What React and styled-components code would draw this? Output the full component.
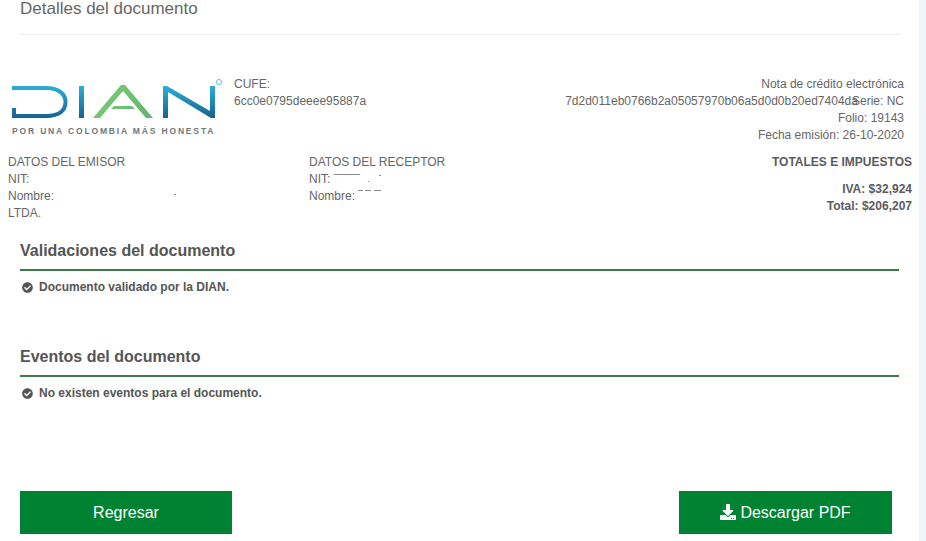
import React from "react";
import styled, { createGlobalStyle } from "styled-components";
import { FaCheckCircle, FaDownload } from "react-icons/fa";

const Global = createGlobalStyle`
  html, body { margin: 0; padding: 0; background: #fff; overflow: hidden; }
  body { font-family: "Liberation Sans", Arial, sans-serif; color: #666; font-size: 12px; line-height: 17px; }
`;
const Page = styled.div`display: flex; width: 926px; height: 541px; overflow: hidden;`;
const Main = styled.main`width: 919px; flex: none; display: flex; flex-direction: column;`;
const Rail = styled.div`flex: 1; background: #f1f3f6;`;
const Title = styled.h1`
  margin: 0 19px 0 20px; height: 34px; border-bottom: 1px solid #eeeeee;
  font-weight: 400; font-size: 17px; line-height: 17px; color: #666;
`;
const Header = styled.div`display: flex; padding: 41px 15px 0 8px; height: 68px; justify-content: space-between;`;
const LogoBlock = styled.div`width: 226px; flex: none; padding-top: 2px; display: flex; flex-direction: column;`;
const Tagline = styled.div`
  margin: 0 0 0 4px; white-space: nowrap; font-size: 8.5px; line-height: 10px; font-weight: 700;
  letter-spacing: 1.84px; color: #71787d;
`;
const Cufe = styled.div`flex: 1; white-space: nowrap; min-width: 0;`;
const Gap = styled.span`display: inline-block; width: ${p => p.$w}px;`;
const Meta = styled.div`flex: none; text-align: right;`;
const Parties = styled.div`display: flex; padding: 10px 7px 0 8px; height: 67px;`;
const Party = styled.div`width: 301px; flex: none; white-space: nowrap;`;
const Totals = styled.div`flex: 1; text-align: right; font-weight: 700; color: #5c5c5c;`;
const TotalsTitle = styled.div`margin-bottom: 10px;`;
const Mark = styled.span`
  display: inline-block; width: ${p => p.$w}px; height: 1px; background: #8a8a8a;
  vertical-align: ${p => p.$v}px; margin-left: ${p => p.$m || 0}px;
`;
const Section = styled.section`margin: 20px 20px 0; height: 86px;`;
const SectionTitle = styled.h2`
  margin: 0; font-size: 16px; line-height: 18px; font-weight: 700; color: #555; padding: 1px 0 9px;
  border-bottom: 2px solid #3f7a4b;
`;
const Item = styled.p`
  margin: 9px 0 0 2px; display: flex; align-items: center; gap: 6px;
  font-size: 12px; line-height: 15px; font-weight: 700; color: #555;
  svg { width: 11px; height: 11px; flex: none; color: #555; }
`;
const Actions = styled.div`display: flex; justify-content: space-between; margin: 58px 27px 0 20px;`;
const Button = styled.button`
  width: ${p => p.$w}px; height: 43px; border: 0; border-radius: 0; background: #008233; color: #fff;
  font-family: inherit; font-size: 16px; display: flex; align-items: center; justify-content: center; gap: 4px; padding: 0;
  svg { width: 16px; height: 16px; margin-top: -2px; }
`;

function Logo() {
  return (
    <svg width="214" height="48" viewBox="10 78 214 48" fill="none" style={{ marginLeft: 2, display: "block" }} aria-label="DIAN">
      <defs>
        <linearGradient id="blue" gradientUnits="userSpaceOnUse" x1="0" y1="86" x2="0" y2="118">
          <stop offset="0" stopColor="#2cb0d6" />
          <stop offset="1" stopColor="#17628f" />
        </linearGradient>
        <linearGradient id="green" gradientUnits="userSpaceOnUse" x1="100" y1="85" x2="150" y2="118">
          <stop offset="0" stopColor="#7fc77a" />
          <stop offset="1" stopColor="#62b86b" />
        </linearGradient>
      </defs>
      <path d="M12 88H46C60 88 65.500 95 65.500 102C65.500 110 60 116 46 116H14V108" stroke="url(#blue)" strokeWidth="4" />
      <rect x="79" y="86" width="5" height="32" fill="url(#blue)" />
      <path d="M93 118L121 85H125L153 118H146L123 91L100 118Z" fill="url(#green)" />
      <path d="M114 106H132L135 109H111Z" fill="url(#green)" />
      <path d="M163 118V86H167L210 111V86H215V118H211L168 92V118Z" fill="url(#blue)" />
      <circle cx="219" cy="82" r="2.6" stroke="#6fc3dc" strokeWidth="1" />
    </svg>
  );
}

export default function App() {
  return (
    <>
      <Global />
      <Page>
        <Main>
          <Title>Detalles del documento</Title>
          <Header>
            <LogoBlock>
              <Logo />
              <Tagline>POR UNA COLOMBIA MÁS HONESTA</Tagline>
            </LogoBlock>
            <Cufe>
              CUFE:<br />
              6cc0e0795deeee95887a<Gap $w={199} />7d2d011eb0766b2a05057970b06a5d0d0b20ed7404da
            </Cufe>
            <Meta>
              Nota de crédito electrónica<br />
              Serie: NC<br />
              Folio: 19143<br />
              Fecha emisión: 26-10-2020
            </Meta>
          </Header>
          <Parties>
            <Party>
              DATOS DEL EMISOR<br />
              NIT:<br />
              Nombre:<Mark $w={2} $v={5} $m={120} /><br />
              LTDA.
            </Party>
            <Party>
              DATOS DEL RECEPTOR<br />
              NIT: <Mark $w={26} $v={8} /><Mark $w={1} $v={1} $m={8} /><Mark $w={2} $v={7} $m={10} /><br />
              Nombre: <Mark $w={5} $v={9} /><Mark $w={6} $v={9} $m={2} /><Mark $w={7} $v={9} $m={3} />
            </Party>
            <Totals>
              <TotalsTitle>TOTALES E IMPUESTOS</TotalsTitle>
              IVA: $32,924<br />
              Total: $206,207
            </Totals>
          </Parties>
          <Section>
            <SectionTitle>Validaciones del documento</SectionTitle>
            <Item><FaCheckCircle />Documento validado por la DIAN.</Item>
          </Section>
          <Section>
            <SectionTitle>Eventos del documento</SectionTitle>
            <Item><FaCheckCircle />No existen eventos para el documento.</Item>
          </Section>
          <Actions>
            <Button $w={212}>Regresar</Button>
            <Button $w={213}><FaDownload />Descargar PDF</Button>
          </Actions>
        </Main>
        <Rail />
      </Page>
    </>
  );
}
